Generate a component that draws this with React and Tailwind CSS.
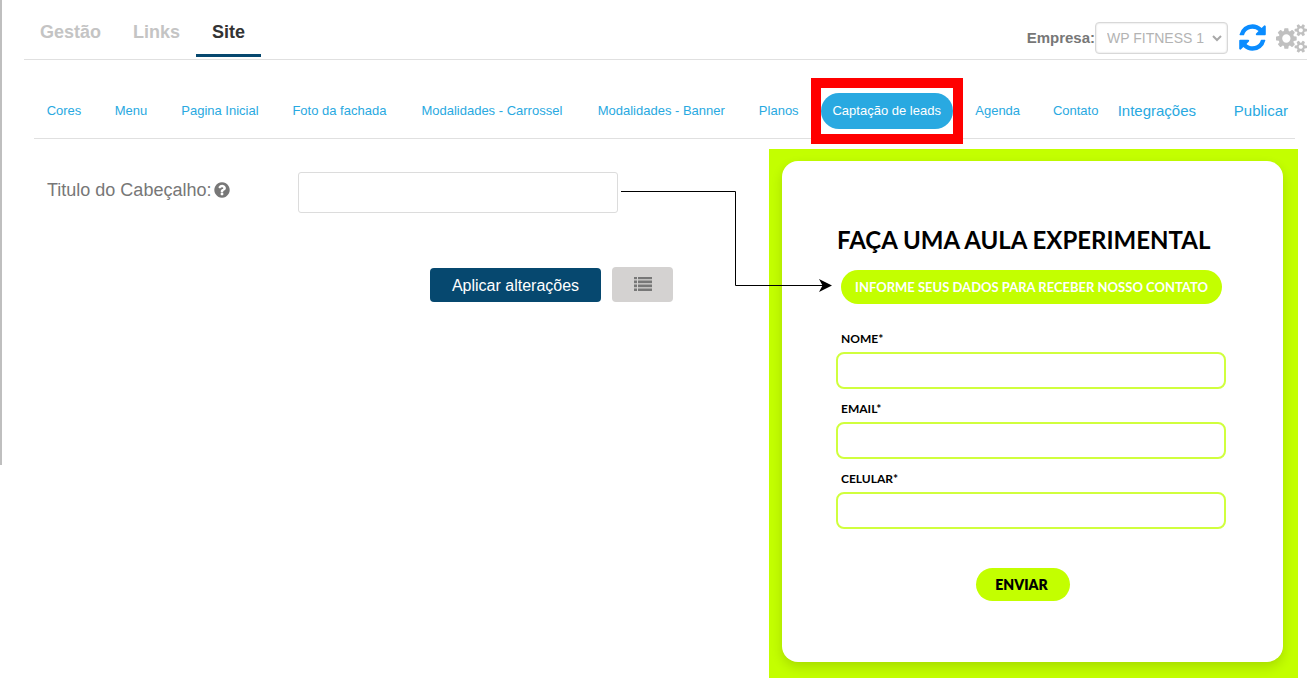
import React, { useState } from "react";

const mainTabs = ["Gestão", "Links", "Site"];

const siteTabs = [
  "Cores",
  "Menu",
  "Pagina Inicial",
  "Foto da fachada",
  "Modalidades - Carrossel",
  "Modalidades - Banner",
  "Planos",
  "Captação de leads",
  "Agenda",
  "Contato",
];

const leadFields = [
  { id: "nome", label: "NOME*", type: "text" },
  { id: "email", label: "EMAIL*", type: "email" },
  { id: "celular", label: "CELULAR*", type: "tel" },
];

const RefreshIcon = () => (
  <svg className="h-[31px] w-[31px]" viewBox="0 0 1792 1792" fill="currentColor" aria-hidden="true">
    <path d="M1639 1056q0 5-1 7-64 268-268 434.500t-478 166.500q-146 0-282.500-55t-243.500-157l-129 129q-19 19-45 19t-45-19-19-45v-448q0-26 19-45t45-19h448q26 0 45 19t19 45-19 45l-137 137q71 66 161 102t187 36q134 0 250-65t186-179q11-17 53-117 8-23 30-23h192q13 0 22.500 9.500t9.500 22.500zm25-800v448q0 26-19 45t-45 19h-448q-26 0-45-19t-19-45 19-45l138-138q-148-137-349-137-134 0-250 65t-186 179q-11 17-53 117-8 23-30 23h-199q-13 0-22.500-9.500t-9.500-22.500v-7q65-268 270-434.500t480-166.500q146 0 284 55.500t245 156.500l130-129q19-19 45-19t45 19 19 45z" />
  </svg>
);

const CogsIcon = () => (
  <svg className="h-[29px] w-[31px]" viewBox="0 0 1920 1792" fill="currentColor" aria-hidden="true">
    <path d="M896 896q0-106-75-181t-181-75-181 75-75 181 75 181 181 75 181-75 75-181zm768 512q0-52-38-90t-90-38-90 38-38 90q0 53 37.5 90.5t90.5 37.5 90.5-37.5 37.5-90.5zm0-1024q0-52-38-90t-90-38-90 38-38 90q0 53 37.5 90.5t90.5 37.5 90.5-37.5 37.5-90.5zm-384 421v185q0 10-7 19.5t-16 10.5l-155 24q-11 35-32 76 34 48 90 115 7 11 7 20 0 12-7 19-23 30-82.5 89.5t-78.5 59.5q-11 0-21-7l-115-90q-37 19-77 31-11 108-23 155-7 24-30 24h-186q-11 0-20-7.5t-10-17.5l-23-153q-34-10-75-31l-118 89q-7 7-20 7-11 0-21-8-144-133-144-160 0-9 7-19 10-14 41-53t47-61q-23-44-35-82l-152-24q-10-1-17-9.5t-7-19.5v-185q0-10 7-19.5t16-10.5l155-24q11-35 32-76-34-48-90-115-7-11-7-20 0-12 7-20 22-30 82-89t79-59q11 0 21 7l115 90q34-18 77-32 11-108 23-154 7-24 30-24h186q11 0 20 7.5t10 17.5l23 153q34 10 75 31l118-89q8-7 20-7 11 0 21 8 144 133 144 160 0 8-7 19-12 16-42 54t-45 60q23 48 34 82l152 23q10 2 17 10.5t7 19.5zm640 533v140q0 16-149 31-12 27-30 52 51 113 51 138 0 4-4 7-122 71-124 71-8 0-46-47t-52-68q-20 2-30 2t-30-2q-14 21-52 68t-46 47q-2 0-124-71-4-3-4-7 0-25 51-138-18-25-30-52-149-15-149-31v-140q0-16 149-31 13-29 30-52-51-113-51-138 0-4 4-7 4-2 35-20t59-34 30-16q8 0 46 46.5t52 67.5q20-2 30-2t30 2q51-71 92-112l6-2q4 0 124 70 4 3 4 7 0 25-51 138 17 23 30 52 149 15 149 31zm0-1024v140q0 16-149 31-12 27-30 52 51 113 51 138 0 4-4 7-122 71-124 71-8 0-46-47t-52-68q-20 2-30 2t-30-2q-14 21-52 68t-46 47q-2 0-124-71-4-3-4-7 0-25 51-138-18-25-30-52-149-15-149-31v-140q0-16 149-31 13-29 30-52-51-113-51-138 0-4 4-7 4-2 35-20t59-34 30-16q8 0 46 46.5t52 67.5q20-2 30-2t30 2q51-71 92-112l6-2q4 0 124 70 4 3 4 7 0 25-51 138 17 23 30 52 149 15 149 31z" />
  </svg>
);

const HelpIcon = () => (
  <svg className="h-[18px] w-[18px]" viewBox="0 0 1792 1792" fill="currentColor" aria-hidden="true">
    <path d="M1024 1376v-192q0-14-9-23t-23-9h-192q-14 0-23 9t-9 23v192q0 14 9 23t23 9h192q14 0 23-9t9-23zm256-672q0-88-55.5-163t-138.5-116-170-41q-243 0-371 213-15 24 8 42l132 100q7 6 19 6 16 0 25-12 53-68 86-92 34-24 86-24 48 0 85.5 26t37.5 59q0 38-20 61t-68 45q-63 28-115.5 86.5t-52.5 125.5v36q0 14 9 23t23 9h192q14 0 23-9t9-23q0-19 21.5-49.5t54.5-49.5q32-18 49-28.5t46-35 44.5-48 28-60.5 12.5-81zm384 192q0 209-103 385.5t-279.5 279.5-385.5 103-385.5-103-279.5-279.5-103-385.5 103-385.5 279.5-279.5 385.5-103 385.5 103 279.5 279.5 103 385.5z" />
  </svg>
);

const ListIcon = () => (
  <svg className="h-[14px] w-[18px]" viewBox="0 0 18 14" fill="currentColor" aria-hidden="true">
    {[0, 4, 8, 12].map(y => (
      <g key={y}>
        <rect x="0" y={y - 0.5} width="3" height="2.7" />
        <rect x="4" y={y - 0.5} width="14" height="2.7" />
      </g>
    ))}
  </svg>
);

const Header = ({ tab, setTab }) => (
  <header className="ml-6 mr-[7px] flex h-[60px] items-start justify-between border-b border-[#e0e0e0]">
    <nav className="flex text-lg font-bold">
      {mainTabs.map(t => (
        <a
          key={t}
          href="#"
          onClick={() => setTab(t)}
          className={
            t === tab
              ? "h-[57px] border-b-3 border-[#06486f] px-4 pt-[18px] text-[#333]"
              : "h-[57px] px-4 pt-[18px] text-[#c4c4c4]"
          }
        >
          {t}
        </a>
      ))}
    </nav>
    <div className="flex h-[60px] items-center pt-4">
      <label htmlFor="empresa" className="text-[15px] font-bold text-[#777]">Empresa:</label>
      <div className="relative">
        <select
          id="empresa"
          className="block h-8 w-[133px] appearance-none rounded border border-[#d8d8d8] bg-white pl-[11px] text-sm text-[#b3b3b3] shadow-[inset_0_0_2px_rgba(0,0,0,0.2)]"
        >
          <option>WP FITNESS 1</option>
        </select>
        <svg className="pointer-events-none absolute right-[6px] top-3 h-2 w-[10px]" viewBox="0 0 10 8" fill="none" stroke="#a8a8a8" strokeWidth="2">
          <path d="M1 2l4 4 4-4" />
        </svg>
      </div>
      <button className="ml-[9px] pb-[2px] text-[#0a8cff]" aria-label="Atualizar"><RefreshIcon /></button>
      <button className="ml-2 text-[#c0c0c0]" aria-label="Configurações"><CogsIcon /></button>
    </div>
  </header>
);

const SiteNav = ({ page, setPage }) => (
  <nav className="ml-[34px] mr-[19px] grid h-[79px] grid-cols-[60fr_74fr_104fr_135fr_170fr_169fr_66fr_150fr_72fr_84fr_78fr_99fr] items-center border-b border-[#e0e0e0] pt-6 text-[13px] whitespace-nowrap text-[#29a9e1]">
    {siteTabs.map(t =>
      t === page ? (
        <div key={t} className="relative flex h-9 items-center justify-center">
          <a href="#" className="flex h-9 w-[132px] items-center justify-center rounded-full bg-[#29a9e1] font-medium text-white">{t}</a>
          <div className="pointer-events-none absolute -inset-x-px -inset-y-[15px] border-10 border-[#ff0000]" />
        </div>
      ) : (
        <a key={t} href="#" onClick={() => setPage(t)} className="text-center">{t}</a>
      )
    )}
    <a href="#" className="text-center text-[15px]">Integrações</a>
    <a href="#" className="pr-[7px] text-right text-[15px]">Publicar</a>
  </nav>
);

const HeaderForm = () => {
  const [title, setTitle] = useState("");

  return (
    <form className="ml-[47px] flex-1 pt-[23px]" onSubmit={e => e.preventDefault()}>
      <div className="flex">
        <div className="flex w-[251px] items-center gap-[2px] pb-[6px] text-[#777]">
          <label htmlFor="titulo" className="text-lg">Titulo do Cabeçalho:</label>
          <HelpIcon />
        </div>
        <div className="relative">
          <input
            id="titulo"
            value={title}
            onChange={e => setTitle(e.target.value)}
            className="block h-[41px] w-80 rounded-[3px] border border-[#dcdcdc] px-3 text-base"
          />
          {/* connector from the field to the preview */}
          <svg className="pointer-events-none absolute left-full top-[14px] z-10 ml-[3px] h-[108px] w-[211px]" viewBox="0 0 211 108" fill="none" aria-hidden="true">
            <path d="M0 5.5H114.5V99.5H202" stroke="#000" />
            <path d="M211 99.5L198 93l3.500 6.500L198 106z" fill="#000" />
          </svg>
        </div>
      </div>
      <div className="ml-[383px] mt-[54px] flex items-end gap-[11px]">
        <button className="h-[34px] w-[171px] rounded bg-[#06486f] pt-px text-base text-white">Aplicar alterações</button>
        <button className="flex h-[35px] w-[61px] items-center justify-center rounded bg-[#d4d2d1] pb-[2px] text-[#777]" aria-label="Lista">
          <ListIcon />
        </button>
      </div>
    </form>
  );
};

const LeadPreview = () => (
  <section className="mr-4 w-[529px] bg-[#c3ff00] pt-3 pr-[15px] pb-4 pl-[13px] font-['Lato',sans-serif] text-black">
    <form className="rounded-2xl bg-white pt-[63px] pr-[57px] pb-[61px] pl-[54px] shadow-[0_5px_12px_rgba(0,0,0,0.14)]" onSubmit={e => e.preventDefault()}>
      <h2 className="pl-px text-2xl leading-8 font-bold whitespace-nowrap">FAÇA UMA AULA EXPERIMENTAL</h2>
      <p className="mr-1 ml-[5px] mt-[14px] h-[34px] rounded-full bg-[#c3ff00] text-center text-[13px] leading-[34px] font-bold whitespace-nowrap text-white">
        INFORME SEUS DADOS PARA RECEBER NOSSO CONTATO
      </p>
      <div className="mt-[25px] flex flex-col gap-[10px]">
        {leadFields.map(f => (
          <div key={f.id}>
            <label htmlFor={f.id} className="block pl-[5px] text-xs leading-5 font-bold">{f.label}</label>
            <input id={f.id} type={f.type} className="mt-[3px] block h-[37px] w-full rounded-lg border-2 border-[#d0ff3d] px-3 text-sm" />
          </div>
        ))}
      </div>
      <button className="mt-[39px] ml-[140px] block h-[33px] w-[94px] rounded-full bg-[#c3ff00] pr-[3px] text-sm font-extrabold">ENVIAR</button>
    </form>
  </section>
);

const App = () => {
  const [tab, setTab] = useState("Site");
  const [page, setPage] = useState("Captação de leads");

  return (
    <div className="relative bg-white font-['Liberation_Sans',Arial,sans-serif]">
      <div className="absolute left-0 top-0 h-[465px] w-[2px] bg-[#bfbfbf]" />
      <Header tab={tab} setTab={setTab} />
      <SiteNav page={page} setPage={setPage} />
      <main className="flex items-start pt-[10px] pb-[11px]">
        <HeaderForm />
        <LeadPreview />
      </main>
    </div>
  );
};

export default App;
